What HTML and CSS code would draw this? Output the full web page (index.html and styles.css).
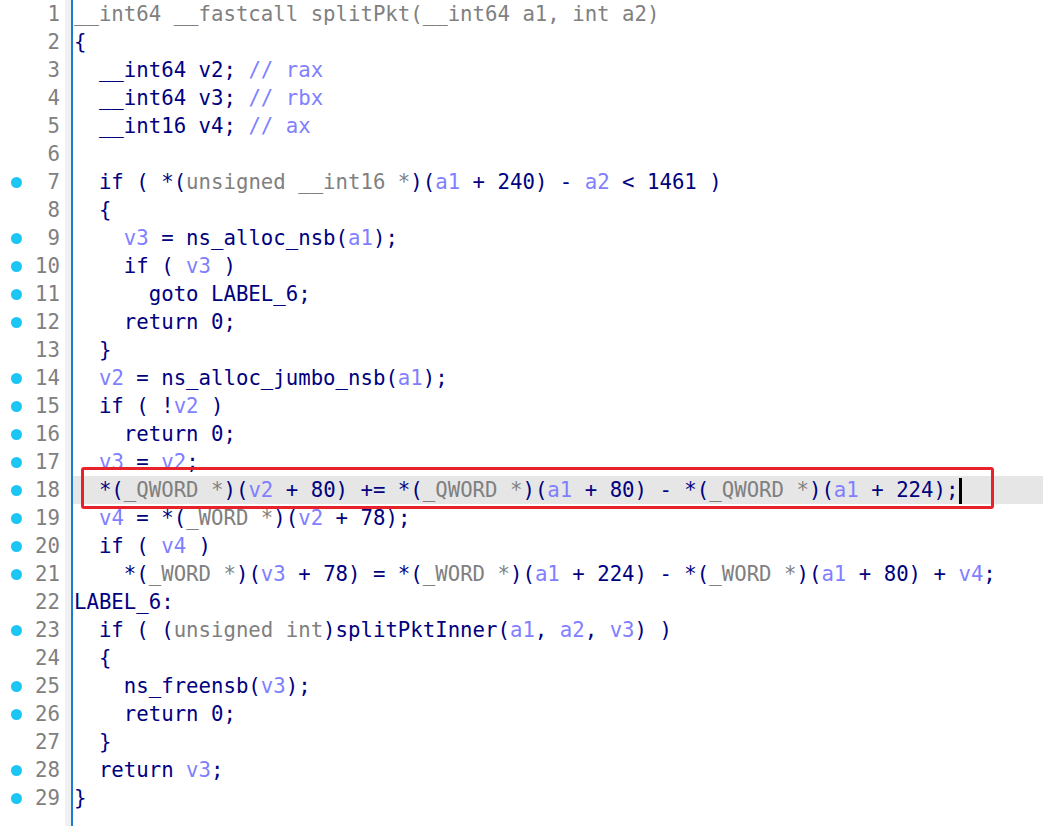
FILE: index.html
```html
<!DOCTYPE html>
<html>
<head>
<meta charset="utf-8">
<link rel="stylesheet" href="styles.css">
</head>
<body>
<div class="view">
  <div class="gutter">
    <div class="ln">1</div>
    <div class="ln">2</div>
    <div class="ln">3</div>
    <div class="ln">4</div>
    <div class="ln">5</div>
    <div class="ln">6</div>
    <div class="ln bp">7</div>
    <div class="ln">8</div>
    <div class="ln bp">9</div>
    <div class="ln bp">10</div>
    <div class="ln bp">11</div>
    <div class="ln bp">12</div>
    <div class="ln">13</div>
    <div class="ln bp">14</div>
    <div class="ln bp">15</div>
    <div class="ln bp">16</div>
    <div class="ln bp">17</div>
    <div class="ln bp">18</div>
    <div class="ln bp">19</div>
    <div class="ln bp">20</div>
    <div class="ln bp">21</div>
    <div class="ln">22</div>
    <div class="ln bp">23</div>
    <div class="ln">24</div>
    <div class="ln bp">25</div>
    <div class="ln bp">26</div>
    <div class="ln">27</div>
    <div class="ln bp">28</div>
    <div class="ln bp">29</div>
  </div>
  <div class="sep"></div>
  <div class="code">
<div class="row t">__int64 __fastcall splitPkt(__int64 a1, int a2)</div>
<div class="row">{</div>
<div class="row">  __int64 v2; <span class="v">// rax</span></div>
<div class="row">  __int64 v3; <span class="v">// rbx</span></div>
<div class="row">  __int16 v4; <span class="v">// ax</span></div>
<div class="row"> </div>
<div class="row">  if ( *(<span class="t">unsigned __int16 *</span>)(<span class="v">a1</span> + 240) - <span class="v">a2</span> &lt; 1461 )</div>
<div class="row">  {</div>
<div class="row">    <span class="v">v3</span> = ns_alloc_nsb(<span class="v">a1</span>);</div>
<div class="row">    if ( <span class="v">v3</span> )</div>
<div class="row">      goto LABEL_6;</div>
<div class="row">    return 0;</div>
<div class="row">  }</div>
<div class="row">  <span class="v">v2</span> = ns_alloc_jumbo_nsb(<span class="v">a1</span>);</div>
<div class="row">  if ( !<span class="v">v2</span> )</div>
<div class="row">    return 0;</div>
<div class="row">  <span class="v">v3</span> = <span class="v">v2</span>;</div>
<div class="row cur">  *(<span class="t">_QWORD *</span>)(<span class="v">v2</span> + 80) += *(<span class="t">_QWORD *</span>)(<span class="v">a1</span> + 80) - *(<span class="t">_QWORD *</span>)(<span class="v">a1</span> + 224);<span class="caret"></span><span class="mark"></span></div>
<div class="row">  <span class="v">v4</span> = *(<span class="t">_WORD *</span>)(<span class="v">v2</span> + 78);</div>
<div class="row">  if ( <span class="v">v4</span> )</div>
<div class="row">    *(<span class="t">_WORD *</span>)(<span class="v">v3</span> + 78) = *(<span class="t">_WORD *</span>)(<span class="v">a1</span> + 224) - *(<span class="t">_WORD *</span>)(<span class="v">a1</span> + 80) + <span class="v">v4</span>;</div>
<div class="row">LABEL_6:</div>
<div class="row">  if ( (<span class="t">unsigned int</span>)splitPktInner(<span class="v">a1</span>, <span class="v">a2</span>, <span class="v">v3</span>) )</div>
<div class="row">  {</div>
<div class="row">    ns_freensb(<span class="v">v3</span>);</div>
<div class="row">    return 0;</div>
<div class="row">  }</div>
<div class="row">  return <span class="v">v3</span>;</div>
<div class="row">}</div>
  </div>
</div>
</body>
</html>
```
FILE: styles.css
```css
html, body {
  margin: 0;
  padding: 0;
  background: #ffffff;
}
.view {
  display: flex;
  min-height: 826px;
  font-family: "DejaVu Sans Mono", "Liberation Mono", monospace;
  font-size: 20.7px;
}
.gutter {
  width: 65px;
  flex: none;
}
.ln {
  position: relative;
  height: 28px;
  line-height: 28px;
  text-align: right;
  padding-right: 5px;
  color: #808080;
  box-sizing: border-box;
}
.ln.bp::before {
  content: "";
  position: absolute;
  left: 11px;
  top: 9px;
  width: 11px;
  height: 11px;
  border-radius: 50%;
  background: #1cc6f4;
}
.sep {
  width: 6px;
  flex: none;
  background: #f0f0f0;
  border-right: 2px solid #1a7ad8;
}
.code {
  flex: 1;
  color: #000080;
}
.row {
  position: relative;
  height: 28px;
  line-height: 28px;
  padding-left: 1px;
  white-space: pre;
}
.t { color: #808080; }
.v { color: #7f7fff; }
.row.t { color: #808080; }
.row.cur {
  background: #e6e6e6;
}
.caret {
  display: inline-block;
  width: 3px;
  height: 26px;
  background: #000000;
  vertical-align: middle;
  margin-left: 1px;
}
.mark {
  position: absolute;
  left: 8px;
  top: -9px;
  width: 907px;
  height: 36px;
  border: 3px solid #e8222b;
  border-radius: 3px;
}
```
